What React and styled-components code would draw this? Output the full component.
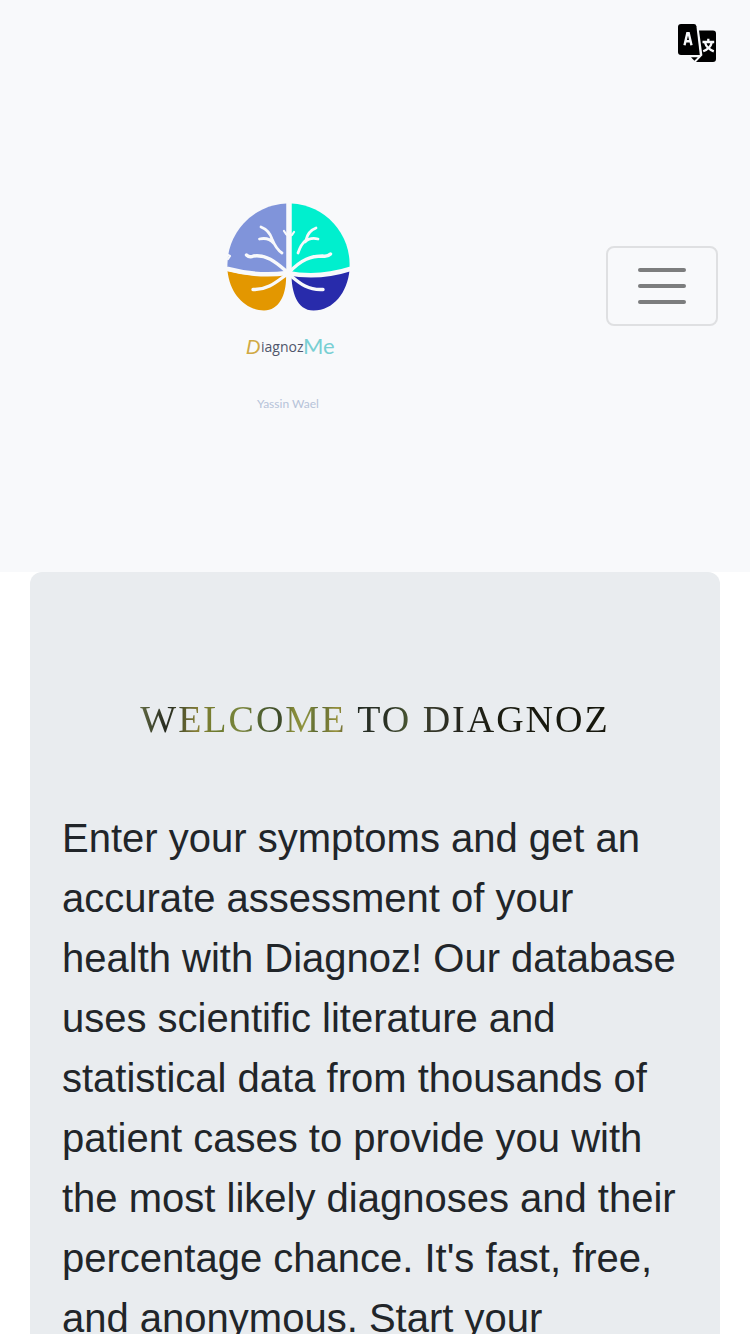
import React from "react";
import styled, { createGlobalStyle } from "styled-components";

const GlobalStyle = createGlobalStyle`
  *, *::before, *::after { box-sizing: border-box; }
  body {
    margin: 0;
    background: #fff;
    color: #212529;
    font-family: "Liberation Sans", Arial, sans-serif;
  }
`;

const Header = styled.header`
  background: #f8f9fb;
  padding: 24px 32px 0 0;
`;

const TopRow = styled.div`
  display: flex;
  justify-content: flex-end;
`;

const LanguageButton = styled.button`
  display: block;
  padding: 0;
  margin-right: 2px;
  border: 0;
  background: transparent;
  cursor: pointer;
  svg { display: block; }
`;

const Navbar = styled.nav`
  display: flex;
  align-items: center;
  justify-content: space-between;
  gap: 30px;
  height: 510px;
  padding-bottom: 62px;
`;

const Brand = styled.a`
  display: flex;
  flex: 1;
  justify-content: center;
  text-decoration: none;
  svg { display: block; }
`;

const Toggler = styled.button`
  display: flex;
  flex-direction: column;
  align-items: center;
  justify-content: center;
  gap: 12px;
  width: 112px;
  height: 80px;
  border: 2px solid #dfe0e2;
  border-radius: 8px;
  background: transparent;
  cursor: pointer;
`;

const Bar = styled.span`
  width: 48px;
  height: 4px;
  border-radius: 2px;
  background: #7c7d7e;
`;

const Jumbotron = styled.main`
  margin: 0 30px;
  padding: 122px 32px 64px;
  border-radius: 12px;
  background: #e9ecef;
`;

const Title = styled.h1`
  margin: 0 0 64px;
  font: 400 38px/50px "Liberation Serif", "Times New Roman", serif;
  letter-spacing: 2px;
  text-align: center;
  text-transform: uppercase;
  color: transparent;
  background: linear-gradient(95deg, #5d6540 13%, #25291f 17%, #4a4f2b 19%, #8a8238 22%, #6c7a2d 25%, #7c8740 29%, #4f6030 32%, #3d4a2a 35%, #858a38 37%, #8f9440 39%, #55632f 41%, #9a943e 44%, #252c24 47%, #2b3225 52%, #465331 55%, #3a3c2c 58%, #26271f 63%, #1a1b10 70%, #14150c 100%);
  background-clip: text;
  -webkit-background-clip: text;
`;

const Lead = styled.p`
  margin: 0;
  font-size: 40px;
  line-height: 60px;
`;

const LanguageIcon = () => (
  <svg width="38" height="38" viewBox="0 0 38 38" aria-hidden="true">
    <path d="M3 0h13q2 0 2.400 2.200L21.800 31H3q-3 0-3-3V3q0-3 3-3Z" />
    <path d="M21 6.500H35q3 0 3 3V35q0 3-3 3H18l6.400-6.800Z" />
    <path d="M13 33.200h6.800l-3.400 3.600Z" />
    <path d="M6.500 21.300 9.300 9.200h1.400l2.800 12.100M7.600 17.300h4.800" fill="none" stroke="#f8f9fb" strokeWidth="2.400" />
    <path d="M24.500 18h11.700M30.300 14.800V18M33.800 18.500c-1 4-4 7-8.600 8.800M27 18.500c1 4 4 7 8.800 8.800" fill="none" stroke="#f8f9fb" strokeWidth="2.300" />
  </svg>
);

const Logo = () => (
  <svg width="150" height="262" viewBox="213 155 150 262" role="img" aria-label="DiagnozMe, Yassin Wael">
    <path d="M286.500 203.500A61.500 61.500 0 0 0 227.500 268q30 10 59 5Z" fill="#8094da" />
    <path d="M291.500 203.500A61 61 0 0 1 349.500 268q-27 10-58 5Z" fill="#00efce" />
    <path d="M227.500 271q30 8 58.500 3c1 19-6 36.500-22 36.500C245 310 230 294 227.500 271Z" fill="#e39700" />
    <path d="M349.500 270q-27 9-58 4c0 17 5 36.500 22 36.500 20 0 34-18 36-40.500Z" fill="#282bab" />
    <g fill="none" stroke="#f8f9fb" strokeWidth="3.400" strokeLinecap="round" strokeLinejoin="round">
      <path d="M289 203v69" strokeWidth="5" />
      <path d="M228 269q30 8 59 4 32 6 63-4" strokeWidth="4.500" />
      <path d="M246.500 255q3 3 7 1c14-2 24 8 35 17 13-14 23-17 34-17q5 1 8-2" />
      <path d="M253 289.500c15 1 25-9 35-16 10 8 18 17 35 16" />
      <path d="M261 227q8 3 11 12 4 10 10 14M259.500 239q9-2 14 4M316 228q-8 3-10 12-5 4-8 13M318 239q-8-2-13 3" strokeWidth="2.800" />
      <path d="m284 231 2 3 3 2 3-1 2-3M228 255l2 1-2 3" strokeWidth="2.200" />
    </g>
    <text x="246" y="354" fontFamily='"Liberation Sans", sans-serif' fontSize="20" fontStyle="italic" fill="#d0a944">D</text>
    <text x="261" y="352" fontFamily='"Open Sans", sans-serif' fontSize="14" fill="#50566b">iagnoz</text>
    <text x="303" y="354" fontFamily="Lato, sans-serif" fontSize="22" fill="#78cfd3">Me</text>
    <text x="257" y="408" fontFamily="Lato, sans-serif" fontSize="12" fill="#b6c3d9">Yassin Wael</text>
  </svg>
);

export default function App() {
  return (
    <>
      <GlobalStyle />
      <Header>
        <TopRow>
          <LanguageButton type="button" aria-label="Change language"><LanguageIcon /></LanguageButton>
        </TopRow>
        <Navbar>
          <Brand href="#"><Logo /></Brand>
          <Toggler type="button" aria-label="Toggle navigation"><Bar /><Bar /><Bar /></Toggler>
        </Navbar>
      </Header>
      <Jumbotron>
        <Title>Welcome to Diagnoz</Title>
        <Lead>
          Enter your symptoms and get an accurate assessment of your health with Diagnoz! Our
          database uses scientific literature and statistical data from thousands of patient cases
          to provide you with the most likely diagnoses and their percentage chance. It's fast,
          free, and anonymous. Start your
        </Lead>
      </Jumbotron>
    </>
  );
}
